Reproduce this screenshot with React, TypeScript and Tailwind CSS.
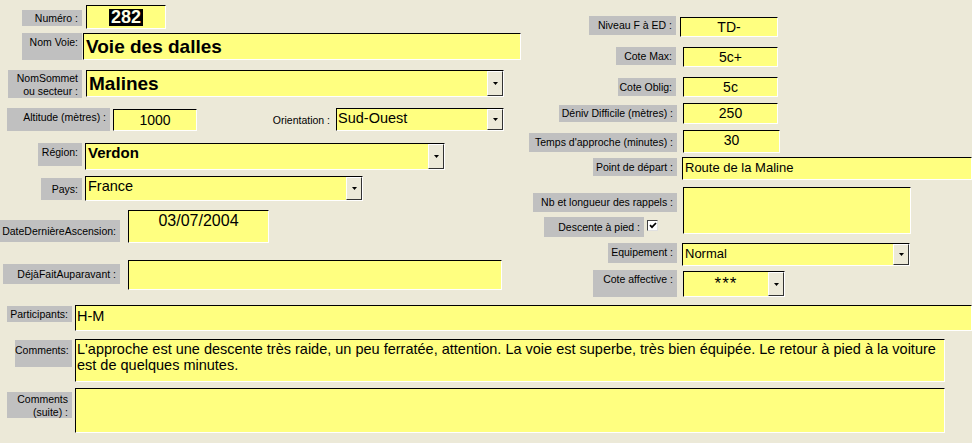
import React from "react";

type P = { cls?: string; children?: React.ReactNode };

function Label({ cls = "", children }: P) {
  return (
    <div
      className={`shrink-0 whitespace-nowrap bg-[#C0C0C0] text-[10.5px] leading-[13px] text-right text-black pr-[4px] ${cls}`}
    >
      {children}
    </div>
  );
}

function Field({ cls = "", children }: P) {
  return (
    <div
      className={`shrink-0 overflow-hidden bg-[#FFFF80] border border-black border-b-white border-r-white text-black ${cls}`}
    >
      {children}
    </div>
  );
}

function DropBtn() {
  return (
    <div className="shrink-0 w-[16px] h-full bg-[#ECE9D8] border border-t-white border-l-white border-b-[#333] border-r-[#333] flex items-center justify-center">
      <svg width="5" height="3" viewBox="0 0 5 3">
        <polygon points="0,0 5,0 2.5,3" fill="black" />
      </svg>
    </div>
  );
}

function Combo({ cls = "", textCls = "", children }: P & { textCls?: string }) {
  return (
    <Field cls={`flex items-stretch ${cls}`}>
      <div className={`flex-1 min-w-0 whitespace-nowrap ${textCls}`}>{children}</div>
      <DropBtn />
    </Field>
  );
}

function Check() {
  return (
    <div className="shrink-0 w-[11px] h-[11px] bg-white border border-[#404040] border-b-[#e0e0e0] border-r-[#e0e0e0] flex items-center justify-center">
      <svg width="8" height="7" viewBox="0 0 8 7">
        <path d="M1 3.2 L3 5.2 L7 1" stroke="black" strokeWidth="1.7" fill="none" />
      </svg>
    </div>
  );
}

export default function App() {
  return (
    <div className="w-[972px] h-[443px] overflow-hidden bg-[#ECE9D8] font-['Liberation_Sans',Arial,sans-serif] text-black flex flex-col">
      <div className="flex items-start">
        {/* Left column */}
        <div className="w-[520px] shrink-0 flex flex-col">
          <div className="flex items-start mt-[5px]">
            <Label cls="ml-[22px] mt-[5px] w-[60px] h-[16px] pt-[2px]">Numéro :</Label>
            <Field cls="ml-[4px] w-[80px] h-[24px] flex items-center justify-center">
              <span className="bg-black text-[#FFFFE8] font-bold text-[18px] leading-[17px] px-[2px]">282</span>
            </Field>
          </div>
          <div className="flex items-start mt-[4px]">
            <Label cls="ml-[22px] w-[60px] h-[27px] pt-[3px]">Nom Voie:</Label>
            <Field cls="ml-[1px] w-[438px] h-[27px] pl-[2px] text-[19px] font-bold leading-[25px]">
              Voie des dalles
            </Field>
          </div>
          <div className="flex items-start mt-[10px]">
            <Label cls="ml-[8px] w-[74px] h-[28px] pt-[2px] leading-[12px]">
              NomSommet
              <br />
              ou secteur :
            </Label>
            <Combo cls="ml-[4px] w-[418px] h-[27px]" textCls="pl-[2px] text-[19px] font-bold leading-[25px]">
              Malines
            </Combo>
          </div>
          <div className="flex items-start mt-[10px]">
            <Label cls="ml-[7px] w-[103px] h-[23px] pt-[3px]">Altitude (mètres) :</Label>
            <Field cls="ml-[3px] mt-[1px] w-[84px] h-[22px] text-center text-[14px] leading-[20px]">1000</Field>
            <div className="shrink-0 ml-[65px] w-[68px] mt-[6px] text-right text-[10.5px] leading-[13px] whitespace-nowrap">Orientation :</div>
            <Combo cls="ml-[6px] w-[168px] h-[23px]" textCls="pl-[1px] text-[14.5px] leading-[19px]">
              Sud-Ouest
            </Combo>
          </div>
          <div className="flex items-start mt-[12px]">
            <Label cls="ml-[38px] w-[44px] h-[23px] pt-[3px]">Région:</Label>
            <Combo cls="ml-[3px] w-[360px] h-[27px]" textCls="pl-[2px] text-[15px] font-bold leading-[18px]">
              Verdon
            </Combo>
          </div>
          <div className="flex items-start mt-[6px]">
            <Label cls="ml-[41px] mt-[2px] w-[41px] h-[22px] pt-[5px]">Pays:</Label>
            <Combo cls="ml-[3px] w-[278px] h-[25px]" textCls="pl-[2px] text-[14.5px] leading-[18px]">
              France
            </Combo>
          </div>
          <div className="flex items-start mt-[9px]">
            <Label cls="ml-0 mt-[10px] w-[120px] h-[22px] pt-[5px] pr-[1px]">DateDernièreAscension:</Label>
            <Field cls="ml-[8px] w-[141px] h-[33px] text-center text-[16px] leading-[20px]">03/07/2004</Field>
          </div>
          <div className="flex items-start mt-[17px]">
            <Label cls="ml-[3px] mt-[4px] w-[117px] h-[20px] pt-[4px]">DéjàFaitAuparavant :</Label>
            <Field cls="ml-[8px] w-[374px] h-[30px]" />
          </div>
        </div>

        {/* Right column */}
        <div className="flex-1 flex flex-col">
          <div className="flex items-start mt-[16px]">
            <Label cls="ml-[69px] w-[87px] h-[19px] pt-[3px]">Niveau F à ED :</Label>
            <Field cls="ml-[4px] mt-[1px] w-[98px] h-[20px] text-center text-[14px] leading-[18px]">TD-</Field>
          </div>
          <div className="flex items-start mt-[10px]">
            <Label cls="ml-[96px] w-[60px] h-[18px] pt-[3px]">Cote Max:</Label>
            <Field cls="ml-[7px] w-[95px] h-[20px] text-center text-[14px] leading-[18px]">5c+</Field>
          </div>
          <div className="flex items-start mt-[10px]">
            <Label cls="ml-[98px] mt-[1px] w-[58px] h-[18px] pt-[3px]">Cote Oblig:</Label>
            <Field cls="ml-[7px] w-[95px] h-[20px] text-center text-[14px] leading-[18px]">5c</Field>
          </div>
          <div className="flex items-start mt-[6px]">
            <Label cls="ml-[39px] mt-[2px] w-[118px] h-[17px] pt-[2px]">Déniv Difficile (mètres) :</Label>
            <Field cls="ml-[6px] w-[95px] h-[21px] text-center text-[14px] leading-[19px]">250</Field>
          </div>
          <div className="flex items-start mt-[6px]">
            <Label cls="ml-[9px] mt-[3px] w-[148px] h-[19px] pt-[3px]">Temps d&apos;approche (minutes) :</Label>
            <Field cls="ml-[6px] w-[97px] h-[23px] text-center text-[14px] leading-[19px]">30</Field>
          </div>
          <div className="flex items-start mt-[4px]">
            <Label cls="ml-[73px] mt-[1px] w-[84px] h-[18px] pt-[3px]">Point de départ :</Label>
            <Field cls="ml-[5px] w-[290px] h-[23px] pl-[2px] text-[13px] leading-[19px] whitespace-nowrap">
              Route de la Maline
            </Field>
          </div>
          <div className="flex items-start mt-[7px]">
            <div className="shrink-0 w-[157px] flex flex-col">
              <Label cls="ml-[13px] mt-[6px] w-[144px] h-[19px] pt-[3px]">Nb et longueur des rappels :</Label>
              <div className="flex items-start mt-[5px]">
                <Label cls="ml-[24px] w-[100px] h-[20px] pt-[4px] pr-[4px]">Descente à pied :</Label>
                <div className="ml-[3px] mt-[3px]">
                  <Check />
                </div>
              </div>
            </div>
            <Field cls="ml-[6px] w-[228px] h-[47px]" />
          </div>
          <div className="flex items-start mt-[6px]">
            <Label cls="ml-[88px] w-[69px] h-[20px] pt-[3px]">Equipement :</Label>
            <Combo cls="ml-[5px] w-[228px] h-[23px]" textCls="pl-[2px] text-[13px] leading-[19px]">
              Normal
            </Combo>
          </div>
          <div className="flex items-start mt-[4px]">
            <Label cls="ml-[73px] w-[84px] h-[27px] pt-[3px]">Cote affective :</Label>
            <Combo cls="ml-[6px] mt-[1px] w-[102px] h-[26px]" textCls="text-center text-[17px] leading-[24px] tracking-[1px]">
              ***
            </Combo>
          </div>
        </div>
      </div>

      {/* Bottom */}
      <div className="flex items-start mt-[8px]">
        <Label cls="ml-[7px] mt-[1px] w-[65px] h-[16px] pt-[2px] pr-[1px]">Participants:</Label>
        <Field cls="ml-[3px] w-[897px] h-[26px] pl-[1px] text-[14.5px] leading-[20px]">H-M</Field>
      </div>
      <div className="flex items-start mt-[8px]">
        <Label cls="ml-[15px] mt-[1px] w-[57px] h-[27px] pt-[4px] pr-[1px]">Comments:</Label>
        <Field cls="ml-[3px] w-[870px] h-[43px] pl-[1px] pt-[1px] text-[14.5px] leading-[16px]">
          <div className="whitespace-nowrap">
            L&apos;approche est une descente très raide, un peu ferratée, attention. La voie est superbe, très bien équipée. Le retour à pied à la voiture
          </div>
          <div className="whitespace-nowrap">est de quelques minutes.</div>
        </Field>
      </div>
      <div className="flex items-start mt-[6px]">
        <Label cls="ml-[7px] mt-[4px] w-[65px] h-[26px] pt-[1px] pr-[2px] leading-[12px]">
          Comments
          <br />
          (suite) :
        </Label>
        <Field cls="ml-[3px] w-[870px] h-[45px]" />
      </div>
    </div>
  );
}
